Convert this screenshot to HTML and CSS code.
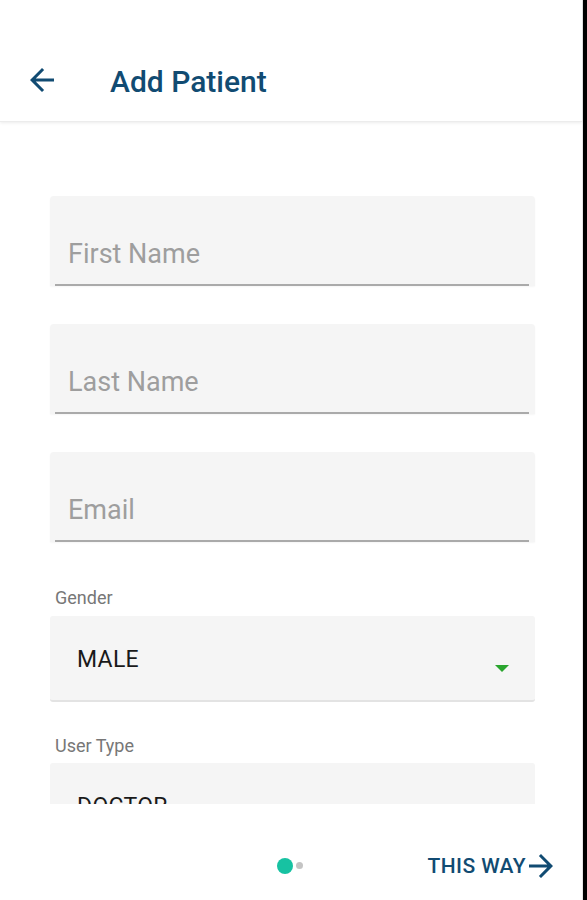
FILE: index.html
```html
<!DOCTYPE html>
<html>
<head>
<meta charset="utf-8">
<link rel="stylesheet" href="styles.css">
</head>
<body>
<div class="frame">
  <div class="app">
    <header class="topbar">
      <svg class="back" viewBox="0 0 24 24" width="36" height="36"><path d="M20 11H7.83l5.59-5.59L12 4l-8 8 8 8 1.41-1.41L7.83 13H20v-2z" fill="#114b72"/></svg>
      <h1 class="title">Add Patient</h1>
    </header>
    <main class="scroll">
      <div class="form">
        <div class="field"><span class="ph">First Name</span><div class="line"></div></div>
        <div class="field"><span class="ph">Last Name</span><div class="line"></div></div>
        <div class="field"><span class="ph">Email</span><div class="line"></div></div>
        <div class="label">Gender</div>
        <div class="select"><span class="val">MALE</span><span class="tri"></span></div>
        <div class="label label2">User Type</div>
        <div class="select"><span class="val">DOCTOR</span><span class="tri"></span></div>
      </div>
    </main>
    <footer class="footer">
      <div class="dots"><span class="dot on"></span><span class="dot"></span></div>
      <div class="next">THIS WAY<svg viewBox="0 0 24 24" width="36" height="36"><path d="M12 4l-1.41 1.41L16.17 11H4v2h12.17l-5.58 5.59L12 20l8-8z" fill="#114b72"/></svg></div>
    </footer>
  </div>
  <div class="edge"></div>
</div>
</body>
</html>
```
FILE: styles.css
```css
html, body { margin: 0; padding: 0; background: #fff; }
body { font-family: Roboto, "Noto Sans", sans-serif; }
.frame { display: flex; width: 587px; height: 900px; overflow: hidden; }
.app { width: 583px; height: 900px; display: flex; flex-direction: column; background: #fff; border-right: 1px solid #e6e6e6; box-sizing: border-box; }
.edge { width: 4px; background: #000; }
.topbar { height: 122px; flex: none; display: flex; align-items: center; padding-top: 36px; box-sizing: border-box; box-shadow: 0 1px 3px rgba(0,0,0,0.08); border-bottom: 1px solid #ececec; position: relative; z-index: 2; }
.back { margin-left: 24px; margin-top: 2px; }
.title { margin: 6px 0 0 50px; font-size: 30px; font-weight: 500; color: #114b72; letter-spacing: 0; }
.scroll { flex: 1; overflow: hidden; }
.form { padding: 74px 0 0 50px; width: 485px; display: flex; flex-direction: column; }
.field { height: 90px; flex: none; background: #f5f5f5; border-radius: 4px 4px 0 0; box-shadow: 0 1px 2px rgba(0,0,0,0.04); display: flex; flex-direction: column; justify-content: flex-end; margin-bottom: 38px; }
.ph { font-size: 27px; color: #9e9e9e; padding-left: 18px; line-height: 30px; margin-bottom: 15px; }
.line { height: 2px; background: #aaaaaa; margin: 0 6px 0 5px; }
.label { font-size: 18px; color: #777; margin: 7px 0 0 5px; height: 29px; line-height: 22px; flex: none; }
.label2 { margin-top: 33px; height: 28px; }
.select { height: 86px; flex: none; background: #f5f5f5; border-radius: 3px; border-bottom: 2px solid #e3e3e3; box-sizing: border-box; position: relative; }
.val { position: absolute; left: 27px; top: 31px; font-size: 23px; color: #1a1a1a; line-height: 26px; letter-spacing: 0.3px; }
.tri { position: absolute; left: 445px; top: 49px; width: 0; height: 0; border-left: 7px solid transparent; border-right: 7px solid transparent; border-top: 7px solid #2aa52e; }
.footer { height: 96px; flex: none; background: #fff; display: flex; align-items: center; padding-top: 27px; box-sizing: border-box; }
.dots { display: flex; align-items: center; margin-left: 277px; gap: 3px; }
.dot { width: 7px; height: 7px; border-radius: 50%; background: #c4c4c4; }
.dot.on { width: 16px; height: 16px; background: #17c2a2; }
.next { display: flex; align-items: center; margin-left: auto; margin-right: 23px; font-size: 21px; font-weight: 500; color: #114b72; letter-spacing: 0.4px; }
.next svg { margin-left: -3px; }
```
